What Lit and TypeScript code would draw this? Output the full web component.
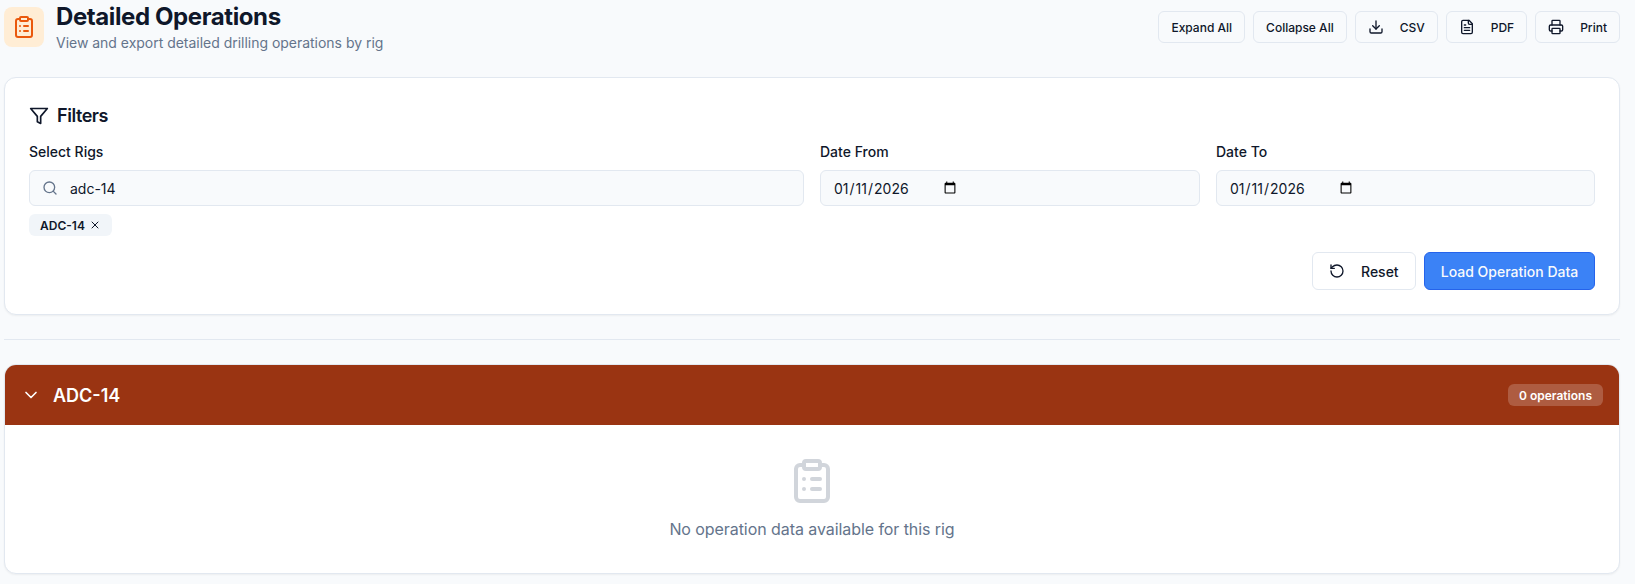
import { LitElement, html, css, svg } from "lit";
import { customElement } from "lit/decorators.js";

const icon = (cls: string, body: unknown) =>
  html`<svg class=${cls} viewBox="0 0 24 24" fill="none" stroke="currentColor" stroke-width="2" stroke-linecap="round" stroke-linejoin="round">${body}</svg>`;

const clipboard = svg`<rect x="8" y="2" width="8" height="4" rx="1"/><path d="M16 4h2a2 2 0 0 1 2 2v14a2 2 0 0 1-2 2H6a2 2 0 0 1-2-2V6a2 2 0 0 1 2-2h2"/><path d="M12 11h4"/><path d="M12 16h4"/><path d="M8 11h.01"/><path d="M8 16h.01"/>`;
const funnel = svg`<polygon points="22 3 2 3 10 12.46 10 19 14 21 14 12.46 22 3"/>`;
const search = svg`<circle cx="11" cy="11" r="8"/><path d="m21 21-4.3-4.3"/>`;
const download = svg`<path d="M21 15v4a2 2 0 0 1-2 2H5a2 2 0 0 1-2-2v-4"/><polyline points="7 10 12 15 17 10"/><line x1="12" y1="15" x2="12" y2="3"/>`;
const file = svg`<path d="M15 2H6a2 2 0 0 0-2 2v16a2 2 0 0 0 2 2h12a2 2 0 0 0 2-2V7Z"/><path d="M14 2v4a2 2 0 0 0 2 2h4"/><path d="M10 9H8"/><path d="M16 13H8"/><path d="M16 17H8"/>`;
const printer = svg`<path d="M6 18H4a2 2 0 0 1-2-2v-5a2 2 0 0 1 2-2h16a2 2 0 0 1 2 2v5a2 2 0 0 1-2 2h-2"/><path d="M6 9V3a1 1 0 0 1 1-1h10a1 1 0 0 1 1 1v6"/><rect x="6" y="14" width="12" height="8" rx="1"/>`;
const reset = svg`<path d="M3 12a9 9 0 1 0 9-9 9.75 9.75 0 0 0-6.74 2.74L3 8"/><path d="M3 3v5h5"/>`;
const chevron = svg`<path d="m6 9 6 6 6-6"/>`;
const x = svg`<path d="M18 6 6 18"/><path d="m6 6 12 12"/>`;

@customElement("app-root")
export class AppRoot extends LitElement {
  static styles = css`
    :host {
      display: block;
      height: 584px;
      overflow: hidden;
      background: #f8fafc;
      font-family: Inter, "Liberation Sans", sans-serif;
      color: #0f172a;
    }
    * { box-sizing: border-box; }
    .page { padding: 0 15px 0 4px; display: flex; flex-direction: column; }
    .head { display: flex; justify-content: space-between; height: 77px; }
    .title-wrap { display: flex; gap: 12px; align-items: flex-start; padding-top: 7px; }
    .logo {
      width: 40px; height: 40px; border-radius: 8px; background: #ffedd5;
      color: #ea580c; display: flex; align-items: center; justify-content: center;
    }
    .i24 { width: 24px; height: 24px; }
    h1 { margin: -6px 0 0; font-size: 24px; line-height: 32px; font-weight: 700; letter-spacing: -0.4px; }
    .sub { margin: 0; font-size: 14px; line-height: 20px; color: #64748b; letter-spacing: -0.02px; }
    .actions { display: flex; gap: 8px; padding-top: 11px; align-items: flex-start; }
    .btn {
      height: 32px; display: inline-flex; align-items: center; justify-content: center;
      border: 1px solid #e2e8f0; border-radius: 6px; background: #f8fafc; color: #0f172a;
      font: 500 12px Inter, sans-serif; padding: 0 12px;
    }
    .btn .i16 { margin-right: 16px; }
    .i16 { width: 16px; height: 16px; flex: none; }
    .i20 { width: 20px; height: 20px; flex: none; }
    .card {
      background: #fff; border: 1px solid #e2e8f0; border-radius: 12px;
      box-shadow: 0 1px 2px rgba(0,0,0,.05);
    }
    .filters { height: 238px; padding: 24px; }
    .ftitle { display: flex; align-items: center; gap: 8px; font-size: 18px; line-height: 28px; font-weight: 600; letter-spacing: -0.45px; }
    .grid { display: grid; grid-template-columns: 775fr 380fr 379fr; gap: 16px; margin-top: 12px; }
    label { display: block; font-size: 14px; line-height: 20px; font-weight: 500; margin-bottom: 8px; }
    .field {
      height: 36px; width: 100%; border: 1px solid #e2e8f0; border-radius: 6px; background: #f8fafc;
      display: flex; align-items: center; font: 14px Inter, sans-serif; color: #0f172a;
    }
    .field .i16 { color: #64748b; margin-left: 12px; }
    .field span { margin-left: 12px; }
    input.field { padding: 0 12px; outline: none; }
    .chip {
      display: inline-flex; align-items: center; gap: 4px; height: 22px; margin-top: 8px; padding: 0 11px;
      background: #f1f5f9; border-radius: 6px; font-size: 12px; font-weight: 600;
    }
    .i12 { width: 12px; height: 12px; }
    .btns { display: flex; justify-content: flex-end; gap: 8px; margin-top: 16px; }
    .b40 {
      height: 38px; display: inline-flex; align-items: center; border-radius: 6px;
      font: 500 14px Inter, sans-serif;
    }
    .reset { width: 104px; border: 1px solid #e2e8f0; background: #fff; color: #0f172a; padding: 0 16px; }
    .reset .i16 { margin-right: 16px; }
    .load { width: 171px; justify-content: center; border: 1px solid #2563eb; background: #3b82f6; color: #f8fafc; }
    hr { border: 0; border-top: 1px solid #e2e8f0; margin: 24px 0; width: 100%; }
    .sec { height: 210px; overflow: hidden; display: flex; flex-direction: column; }
    .sec-head {
      height: 60px; background: #9a3412; color: #fff; flex: none;
      display: flex; align-items: center; justify-content: space-between; padding: 0 16px;
    }
    .sec-l { display: flex; align-items: center; gap: 12px; font-size: 18px; font-weight: 600; }
    .count {
      height: 22px; display: flex; align-items: center; padding: 0 11px; border-radius: 6px;
      background: rgba(255,255,255,.2); font-size: 12px; font-weight: 600;
    }
    .empty { flex: 1; display: flex; flex-direction: column; align-items: center; padding-top: 32px; }
    .i48 { width: 48px; height: 48px; color: #d1d5db; }
    .empty p { margin: 12px 0 0; font-size: 16px; line-height: 24px; color: #64748b; letter-spacing: -0.07px; }
  `;

  render() {
    return html`<div class="page">
      <header class="head">
        <div class="title-wrap">
          <div class="logo">${icon("i24", clipboard)}</div>
          <div>
            <h1>Detailed Operations</h1>
            <p class="sub">View and export detailed drilling operations by rig</p>
          </div>
        </div>
        <div class="actions">
          <button class="btn">Expand All</button>
          <button class="btn">Collapse All</button>
          <button class="btn">${icon("i16", download)}CSV</button>
          <button class="btn">${icon("i16", file)}PDF</button>
          <button class="btn">${icon("i16", printer)}Print</button>
        </div>
      </header>

      <section class="card filters">
        <div class="ftitle">${icon("i20", funnel)}Filters</div>
        <div class="grid">
          <div>
            <label>Select Rigs</label>
            <div class="field">${icon("i16", search)}<span>adc-14</span></div>
            <div class="chip">ADC-14 ${icon("i12", x)}</div>
          </div>
          <div>
            <label>Date From</label>
            <input class="field" type="date" value="2026-01-11" />
          </div>
          <div>
            <label>Date To</label>
            <input class="field" type="date" value="2026-01-11" />
          </div>
        </div>
        <div class="btns">
          <button class="b40 reset">${icon("i16", reset)}Reset</button>
          <button class="b40 load">Load Operation Data</button>
        </div>
      </section>

      <hr />

      <section class="card sec">
        <div class="sec-head">
          <div class="sec-l">${icon("i20", chevron)}ADC-14</div>
          <div class="count">0 operations</div>
        </div>
        <div class="empty">
          ${icon("i48", clipboard)}
          <p>No operation data available for this rig</p>
        </div>
      </section>
    </div>`;
  }
}
